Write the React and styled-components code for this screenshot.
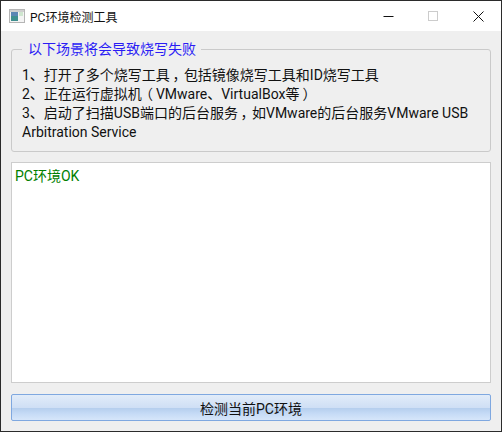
import React from "react"
import styled, { createGlobalStyle } from "styled-components"

const GlobalStyle = createGlobalStyle`
  html, body { margin: 0; padding: 0; }
  body {
    font-family: Roboto, "Noto Sans CJK SC", sans-serif;
    background: #efefef;
  }
`

const Window = styled.div`
  box-sizing: border-box;
  width: 502px;
  height: 432px;
  border: 1px solid #2b2b2b;
  background: #efefef;
  display: flex;
  flex-direction: column;
  overflow: hidden;
`

const TitleBar = styled.div`
  height: 30px;
  flex: none;
  background: #fff;
  display: flex;
  align-items: center;
  padding-left: 8px;
`

const AppIcon = styled.svg`
  width: 16px;
  height: 14px;
  margin-right: 5px;
  flex: none;
`

const Title = styled.div`
  flex: 1;
  font-size: 12px;
  color: #111;
`

const WinButton = styled.div`
  width: 45px;
  height: 30px;
  display: flex;
  align-items: center;
  justify-content: center;
`

const Body = styled.div`
  flex: 1;
  display: flex;
  flex-direction: column;
  padding: 9px 10px 10px;
  min-height: 0;
`

const Group = styled.fieldset`
  box-sizing: border-box;
  margin: 0;
  padding: 8px 10px 0;
  height: 112px;
  flex: none;
  border: 1px solid #cacaca;
  border-radius: 3px;
`

const Legend = styled.legend`
  padding: 0 5px 0 6px;
  font-size: 14px;
  line-height: 18px;
  color: #2a1cf5;
`

const InfoLine = styled.div`
  font-size: 14px;
  line-height: 19px;
  color: #111;
  white-space: nowrap;
`

// the reference font sits full width punctuation in the middle of its cell
const Punct = styled.span`
  display: inline-block;
  width: 14px;
  text-align: center;
  font-feature-settings: "palt";
`

const Log = styled.div`
  box-sizing: border-box;
  flex: 1;
  margin-top: 10px;
  background: #fff;
  border: 1px solid #cdcdcd;
  padding: 3px;
  font-size: 14px;
  line-height: 20px;
  color: #008000;
`

const CheckButton = styled.button`
  box-sizing: border-box;
  flex: none;
  height: 27px;
  margin-top: 11px;
  border: 1px solid #7fa8e0;
  border-radius: 2px;
  padding: 0;
  font-family: inherit;
  font-size: 14px;
  color: #111;
  background: linear-gradient(to bottom, #e2ecf9 0%, #cfdff5 50%, #b6cfee 54%, #c6dbf6 75%, #d6e6fa 100%);
`

const App = () => {
  return (
    <>
      <GlobalStyle />
      <Window>
        <TitleBar>
          <AppIcon viewBox="0 0 16 14">
            <rect x="0.5" y="0.5" width="15" height="13" fill="#f4f4f4" stroke="#b5b5b5" />
            <rect x="1" y="1" width="14" height="2" fill="#cfcfcf" />
            <rect x="2" y="3" width="7" height="9" fill="#3f8f8f" />
            <rect x="2" y="3" width="7" height="4" fill="#5b86b4" />
            <rect x="10" y="3" width="4" height="4" fill="#cfe6cf" />
          </AppIcon>
          <Title>PC环境检测工具</Title>
          <WinButton>
            <svg width="11" height="11" viewBox="0 0 11 11">
              <path d="M0.5 5.5H10.5" stroke="#111" fill="none" />
            </svg>
          </WinButton>
          <WinButton>
            <svg width="11" height="11" viewBox="0 0 11 11">
              <rect x="0.5" y="0.5" width="9" height="9" stroke="#ccc" fill="none" />
            </svg>
          </WinButton>
          <WinButton>
            <svg width="11" height="11" viewBox="0 0 11 11">
              <path d="M0.5 0.5L10.5 10.5M10.5 0.5L0.5 10.5" stroke="#111" fill="none" />
            </svg>
          </WinButton>
        </TitleBar>
        <Body>
          <Group>
            <Legend>以下场景将会导致烧写失败</Legend>
            <InfoLine>1、打开了多个烧写工具<Punct>，</Punct>包括镜像烧写工具和ID烧写工具</InfoLine>
            <InfoLine>2、正在运行虚拟机<Punct>（</Punct>VMware、VirtualBox等<Punct>）</Punct></InfoLine>
            <InfoLine>3、启动了扫描USB端口的后台服务<Punct>，</Punct>如VMware的后台服务VMware USB</InfoLine>
            <InfoLine>Arbitration Service</InfoLine>
          </Group>
          <Log>PC环境OK</Log>
          <CheckButton type="button">检测当前PC环境</CheckButton>
        </Body>
      </Window>
    </>
  )
}

export default App
